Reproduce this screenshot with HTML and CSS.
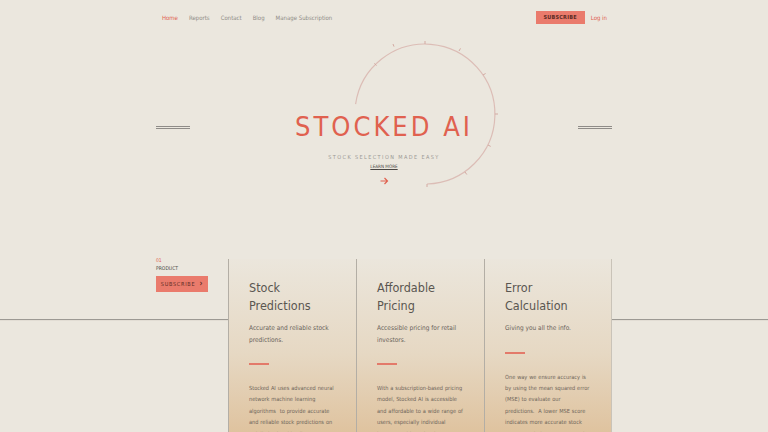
FILE: index.html
```html
<!DOCTYPE HTML>
<html>
<head>
<link rel="stylesheet" href="styles.css">
</head>
<body>

  <div class="top-nav">
    <div class="nav-links">
      <a class="nav-link nav-link-active">Home</a>
      <a class="nav-link">Reports</a>
      <a class="nav-link">Contact</a>
      <a class="nav-link">Blog</a>
      <a class="nav-link">Manage Subscription</a>
    </div>
    <div class="nav-actions">
      <a class="btn-subscribe">SUBSCRIBE</a>
      <a class="nav-login">Log in</a>
    </div>
  </div>

  <div class="hero">
    <div class="hero-lines"></div>
    <div class="hero-center">
      <svg class="hero-arc" width="160" height="160" viewBox="0 0 160 160">
        <path d="M 10.6 70.2 A 70 70 0 1 1 82 150" fill="none" stroke="#dcbdb6" stroke-width="1.2"/>
        <g stroke="#d3aaa2" stroke-width="1">
          <line x1="31.5" y1="31.5" x2="29.4" y2="29.4"/>
          <line x1="49" y1="12.6" x2="48" y2="10"/>
          <line x1="80" y1="10" x2="80" y2="7"/>
          <line x1="114" y1="17" x2="115.5" y2="14.4"/>
          <line x1="138" y1="41" x2="140.6" y2="39.5"/>
          <line x1="150" y1="80" x2="153" y2="80"/>
          <line x1="143" y1="111" x2="145.7" y2="112.4"/>
          <line x1="120" y1="138" x2="121.8" y2="140.5"/>
          <line x1="82" y1="150" x2="82" y2="153"/>
        </g>
      </svg>
      <h1 class="hero-title">STOCKED AI</h1>
      <div class="hero-sub">STOCK SELECTION MADE EASY</div>
      <a class="hero-more">LEARN MORE</a>
      <div class="hero-arrow">
        <svg width="9" height="8" viewBox="0 0 9 8"><path d="M0.5 4 H7.5 M4.5 1 L7.5 4 L4.5 7" fill="none" stroke="#e0614f" stroke-width="1.2"/></svg>
      </div>
    </div>
    <div class="hero-lines"></div>
  </div>

  <div class="product">
    <div class="product-side">
      <div class="product-num">01</div>
      <div class="product-label">PRODUCT</div>
      <a class="btn-side">SUBSCRIBE <span class="btn-chev">&#8250;</span></a>
    </div>
    <div class="card">
      <h2 class="card-title">Stock Predictions</h2>
      <p class="card-lead">Accurate and reliable stock predictions.</p>
      <div class="card-rule"></div>
      <p class="card-body">Stocked AI uses advanced neural network machine learning algorithms&nbsp; to provide accurate and reliable stock predictions on a daily basis. This allows you to make better decisions.</p>
    </div>
    <div class="card">
      <h2 class="card-title">Affordable Pricing</h2>
      <p class="card-lead">Accessible pricing for retail investors.</p>
      <div class="card-rule"></div>
      <p class="card-body">With a subscription-based pricing model, Stocked AI is accessible and affordable to a wide range of users, especially individual investors. This makes it a cost effective choice.</p>
    </div>
    <div class="card">
      <h2 class="card-title">Error Calculation</h2>
      <p class="card-lead">Giving you all the info.</p>
      <div class="card-rule"></div>
      <p class="card-body">One way we ensure accuracy is by using the mean squared error (MSE) to evaluate our predictions.&nbsp; A lower MSE score indicates more accurate stock recommendations. We report the score daily.</p>
    </div>
  </div>

</body>
</html>
```

FILE: styles.css
```css
html, body {
  margin: 0;
  padding: 0;
  background-color: #ebe7de;
  font-family: "DejaVu Sans Condensed", "DejaVu Sans", sans-serif;
  height: 432px;
  overflow: hidden;
}

a {
  cursor: pointer;
}

/* nav */
.top-nav {
  width: 444px;
  margin: 0 auto;
  padding: 10px 6px 0 6px;
  display: flex;
  justify-content: space-between;
  align-items: center;
  height: 15px;
}

.nav-links {
  display: flex;
  gap: 11px;
  margin-left: 0;
}

.nav-link {
  font-size: 6px;
  color: #8f8c86;
}

.nav-link-active {
  color: #e0614f;
}

.nav-actions {
  display: flex;
  align-items: center;
  gap: 6px;
  margin-right: -1px;
}

.btn-subscribe {
  background-color: #ea7b6c;
  color: #5c2b24;
  font-size: 5.5px;
  font-weight: bold;
  letter-spacing: 0.2px;
  padding: 3px 8px;
  line-height: 7px;
}

.nav-login {
  font-size: 6px;
  color: #e0614f;
}

/* hero */
.hero {
  width: 456px;
  margin: 0 auto;
  height: 234px;
  display: flex;
  justify-content: space-between;
}

.hero-lines {
  width: 34px;
  height: 1px;
  margin-top: 101px;
  border-top: 1px solid #8f8c88;
  border-bottom: 1px solid #8f8c88;
}

.hero-center {
  position: relative;
  flex: 1;
  display: flex;
  flex-direction: column;
  align-items: center;
  padding-top: 87px;
}

.hero-arc {
  position: absolute;
  left: 155px;
  top: 9px;
}

.hero-title {
  position: relative;
  margin: 0;
  font-weight: normal;
  font-size: 27px;
  letter-spacing: 3px;
  color: #e0614f;
  line-height: 30px;
  margin-left: 0;
}

.hero-sub {
  position: relative;
  margin-top: 12px;
  font-size: 5.5px;
  letter-spacing: 1.4px;
  color: #9a9894;
}

.hero-more {
  position: relative;
  margin-top: 4px;
  font-size: 4.6px;
  color: #4a4744;
  text-decoration: underline;
}

.hero-arrow {
  position: relative;
  margin-top: 1px;
  margin-left: 1px;
  height: 8px;
}

/* product section */
.product {
  position: relative;
  width: 456px;
  margin: 0 auto;
  display: flex;
  height: 173px;
}

.product::before {
  content: "";
  position: absolute;
  top: 60px;
  left: -200px;
  right: -200px;
  border-top: 1px solid #9c9993;
  border-bottom: 1px solid #e2ddd4;
}

.product-side {
  position: relative;
  width: 72px;
}

.product-num {
  font-size: 5px;
  color: #e0614f;
  line-height: 6px;
  margin-top: -2px;
}

.product-label {
  font-size: 5px;
  color: #4a4744;
  line-height: 6px;
  margin-top: 2px;
}

.btn-side {
  display: inline-block;
  margin-top: 0;
  width: 52px;
  box-sizing: border-box;
  text-align: center;
  background-color: #ea7b6c;
  color: #5c2b24;
  font-size: 5.5px;
  letter-spacing: 0.7px;
  line-height: 15px;
}

.btn-chev {
  font-size: 8px;
  font-weight: bold;
  margin-left: 2px;
}

.card {
  position: relative;
  width: 128px;
  box-sizing: border-box;
  border-left: 1px solid #b3aea5;
  padding: 20px 19px 0 20px;
  overflow: hidden;
  background: linear-gradient(to bottom, #ebe6dc 0%, #e6d8c3 55%, #dfc39f 100%);
}

.card:last-child {
  border-right: 1px solid #c9c3b8;
}

.card-title {
  margin: 0;
  font-weight: normal;
  font-size: 12.5px;
  line-height: 18px;
  color: #5a5651;
}

.card-lead {
  margin: 8px 0 0 0;
  font-size: 6.5px;
  line-height: 11.5px;
  color: #6a635b;
}

.card-rule {
  width: 20px;
  height: 2px;
  background-color: #e37a6a;
  margin-top: 17px;
}

.card-body {
  margin: 18px 0 0 0;
  font-size: 5.6px;
  line-height: 11.4px;
  word-spacing: 0.3px;
  color: #6f655a;
}
```
